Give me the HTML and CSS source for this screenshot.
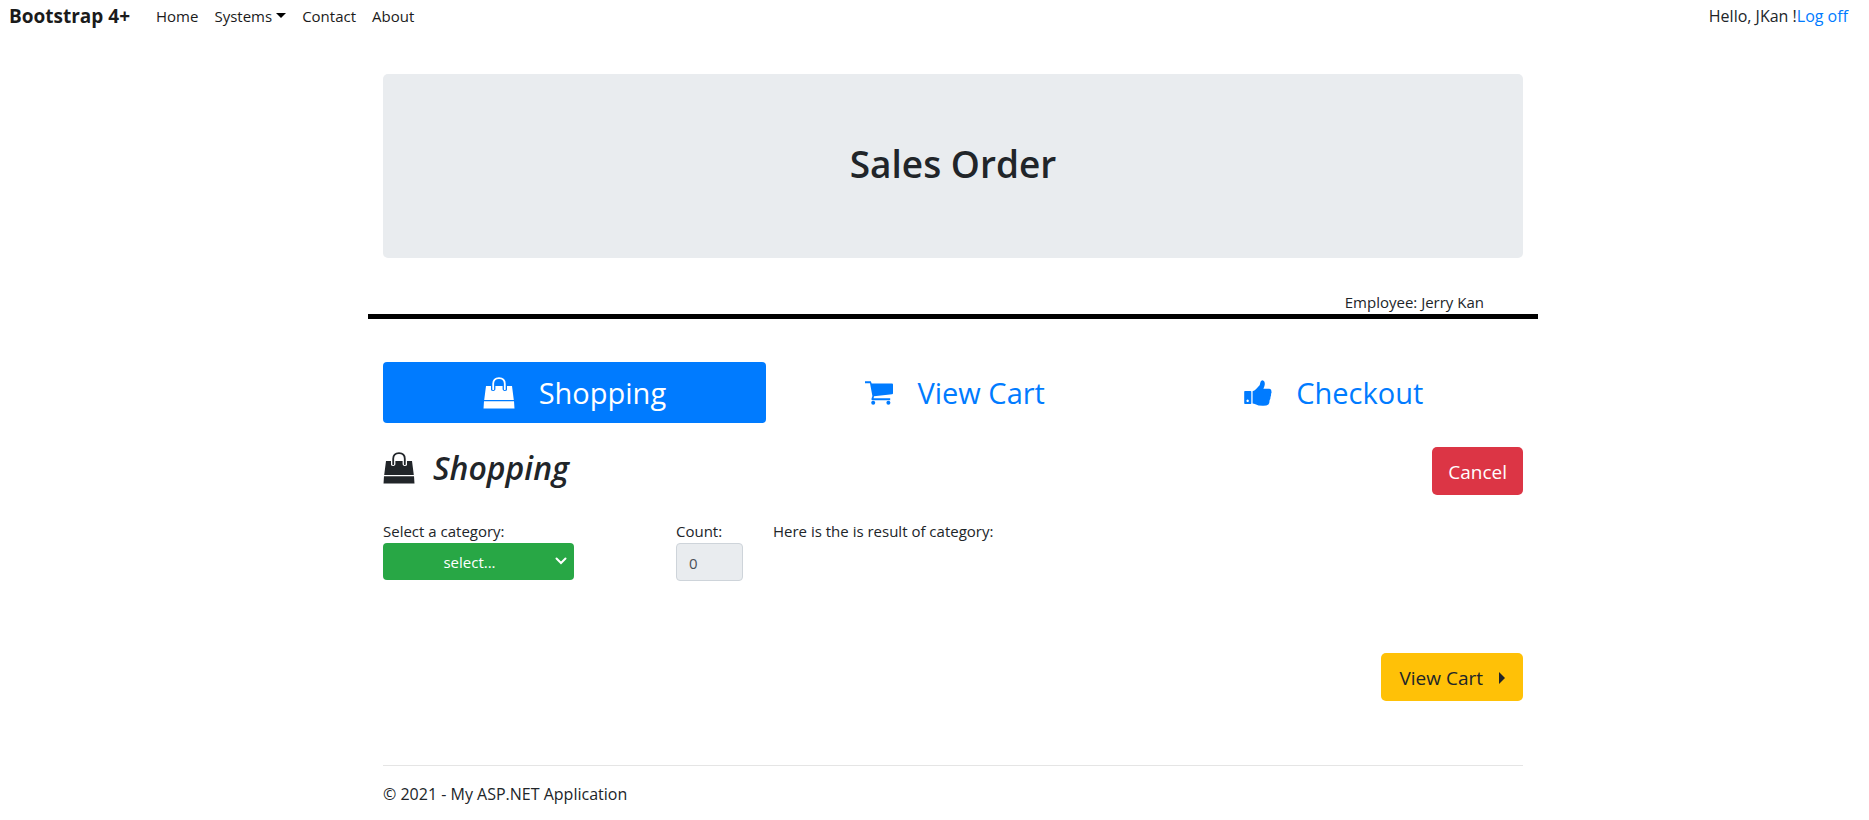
FILE: index.html
```html
<!DOCTYPE html>
<html lang="en">
<head>
<meta charset="utf-8">
<meta name="viewport" content="width=device-width, initial-scale=1">
<title>Sales Order</title>
<link rel="stylesheet" href="styles.css">
</head>
<body>
<svg class="sprite" aria-hidden="true">
  <symbol id="bag" viewBox="0 0 32 32">
    <path d="M3 9H8V13.2Q10.7 15.2 12.4 12.4V9H19.6V12.4Q21.3 15.2 24 13.2V9H29L30.8 23H1.2Z"/>
    <path d="M1 24.2H31L31.5 31.6H.5Z"/>
    <path d="M10.2 12.2V6.8Q10.2 1.2 16 1.2T21.8 6.8V12.2" fill="none" stroke="currentColor" stroke-width="1.8" stroke-linecap="round"/>
  </symbol>
  <symbol id="cart" viewBox="0 0 28 24">
    <path d="M0 .2H5.8L6.7 2.4H27Q28 2.4 28 3.4V12.2Q28 13 27 13.2L9 15.2L8.6 17.2H25.2V19.2H7.2Q6.2 19 6.5 17.8L7.4 15L5 2.2H0Z"/>
    <circle cx="8.2" cy="21.8" r="2"/><circle cx="23.4" cy="21.8" r="2"/>
  </symbol>
  <symbol id="thumb" viewBox="0 0 28 26">
    <path fill-rule="evenodd" d="M1 11H6.5Q7.3 11 7.3 11.8V23.2Q7.3 24 6.5 24H1Q.2 24 .2 23.2V11.8Q.2 11 1 11ZM3.6 19.6a1.2 1.2 0 1 0 .1 0Z"/>
    <path d="M8.6 11.2Q11 11 12.6 8.6L15.6 5.2Q16 4.6 16.2 3Q16.6 .2 18.4 .2Q21 .8 20.8 4.2Q20.7 6 19.4 8.8H25.4Q27.6 9.2 27.4 11.4Q27.9 12.8 27 14Q27.3 15.6 26.5 17Q26.6 18.8 25.6 20.2Q25.6 23 24.4 24.4Q22.6 26 18.6 25.8Q14.2 25.7 11.4 24.2Q10 23.5 8.6 23.5Z"/>
  </symbol>
</svg>

<nav class="navbar">
  <a class="brand" href="#">Bootstrap 4+</a>
  <a class="nav-link" href="#">Home</a>
  <a class="nav-link dropdown" href="#">Systems</a>
  <a class="nav-link" href="#">Contact</a>
  <a class="nav-link" href="#">About</a>
  <p class="account">Hello, JKan !<a class="logoff" href="#">Log off</a></p>
</nav>

<div class="page">
  <main>
    <header class="jumbotron"><h1 class="title">Sales Order</h1></header>
    <p class="employee">Employee: Jerry Kan</p>

    <nav class="tabs" aria-label="Order steps">
      <a class="tab active" href="#shopping"><svg class="icon-bag"><use href="#bag"/></svg>Shopping</a>
      <a class="tab" href="#"><svg class="icon-step"><use href="#cart"/></svg>View Cart</a>
      <a class="tab" href="#"><svg class="icon-step"><use href="#thumb"/></svg>Checkout</a>
    </nav>

    <section id="shopping">
      <div class="section-head">
        <h2 class="section-title"><svg class="icon-bag"><use href="#bag"/></svg><em>Shopping</em></h2>
        <button class="btn btn-danger" type="button">Cancel</button>
      </div>
      <div class="filters">
        <div class="category">
          <label for="category">Select a category:</label>
          <div class="select-wrap">
            <select id="category" class="select"><option>select...</option></select>
            <svg class="chevron" viewBox="0 0 12 8" aria-hidden="true"><path d="M1.5 1.5L6 6L10.5 1.5"/></svg>
          </div>
        </div>
        <div class="count">
          <label for="count">Count:</label>
          <input id="count" class="count-input" type="text" value="0" readonly>
        </div>
        <p class="result">Here is the is result of category:</p>
      </div>
      <div class="actions">
        <button class="btn btn-warning" type="button">View Cart<svg class="caret" viewBox="0 0 6 12" aria-hidden="true"><path d="M0 0L6 6L0 12Z"/></svg></button>
      </div>
    </section>
  </main>
  <footer class="footer">© 2021 - My ASP.NET Application</footer>
</div>
</body>
</html>
```
FILE: styles.css
```css
* { box-sizing: border-box; }
body {
  margin: 0;
  background: #fff;
  color: #212529;
  font-family: "Segoe UI", "Open Sans", "Noto Sans", sans-serif;
  font-size: 15px;
  line-height: 24px;
}
a { color: #007bff; text-decoration: none; }
p, h1, h2 { margin: 0; }
svg { fill: currentColor; flex: none; }
.sprite { position: absolute; width: 0; height: 0; }

.navbar { display: flex; align-items: center; height: 32px; padding: 0 21px 0 9px; }
.brand { margin-right: 18px; color: #1b1b1b; font-size: 19px; font-weight: 700; }
.nav-link { padding: 0 8px; color: #1b1b1b; }
.dropdown::after {
  content: "";
  display: inline-block;
  margin-left: 4px;
  vertical-align: 4px;
  border: 5px solid transparent;
  border-top-color: #000;
  border-bottom: 0;
}
.account { margin-left: auto; font-size: 16px; }

.page {
  max-width: 1207px;
  margin-left: max(0px, calc((100% - 1207px) / 2));
  padding: 42px 0 0 37px;
}
.jumbotron {
  margin: 0 15px 32px;
  padding: 66px 32px 70px;
  border-radius: 5px;
  background: #e9ecef;
  text-align: center;
}
.title { font-size: 37px; line-height: 48px; font-weight: 600; }
.employee { padding-right: 54px; border-bottom: 5px solid #000; text-align: right; }

.tabs { display: flex; margin: 43px 15px 24px; }
.tab {
  display: flex;
  flex: 1 1 auto;
  align-items: center;
  justify-content: center;
  gap: 24px;
  height: 61px;
  border-radius: 4px;
  font-size: 29px;
}
.active { background: #007bff; color: #fff; }
.icon-bag { width: 32px; height: 32px; }
.icon-step { width: 28px; height: 26px; }

.section-head { display: flex; justify-content: space-between; margin: 0 15px 24px; }
.section-title { display: flex; gap: 18px; height: 42px; align-items: center; font-size: 32px; font-weight: 600; }

.btn {
  display: flex;
  align-items: center;
  height: 48px;
  padding: 2px 16px 0;
  border: 0;
  border-radius: 5px;
  font: inherit;
  font-size: 19px;
}
.btn-danger { background: #dc3545; color: #fff; }
.btn-warning { gap: 16px; padding: 2px 18px 0; background: #ffc107; color: #212529; }
.caret { width: 6px; height: 12px; }

.filters { display: flex; margin: 0 15px; }
.category { width: 293px; }
.count { width: 97px; }
.category label, .count label { display: block; height: 24px; }
.select-wrap { position: relative; width: 191px; }
.select {
  width: 100%;
  height: 37px;
  padding: 0 34px 0 16px;
  appearance: none;
  border: 0;
  border-radius: 4px;
  background: #28a745;
  color: #fff;
  font: inherit;
  text-align: center;
  text-align-last: center;
}
.chevron { position: absolute; top: 14px; right: 7px; width: 12px; height: 8px; pointer-events: none; }
.chevron path { fill: none; stroke: #fff; stroke-width: 2; stroke-linecap: round; }
.count-input {
  display: block;
  width: 67px;
  height: 38px;
  padding: 2px 12px 0;
  border: 1px solid #ced4da;
  border-radius: 4px;
  background: #e9ecef;
  color: #495057;
  font: inherit;
}
.actions { display: flex; justify-content: flex-end; margin: 72px 15px 64px; }
.footer { margin: 0 15px; padding: 16px 0 12px; border-top: 1px solid #e5e5e5; font-size: 16px; }
```
